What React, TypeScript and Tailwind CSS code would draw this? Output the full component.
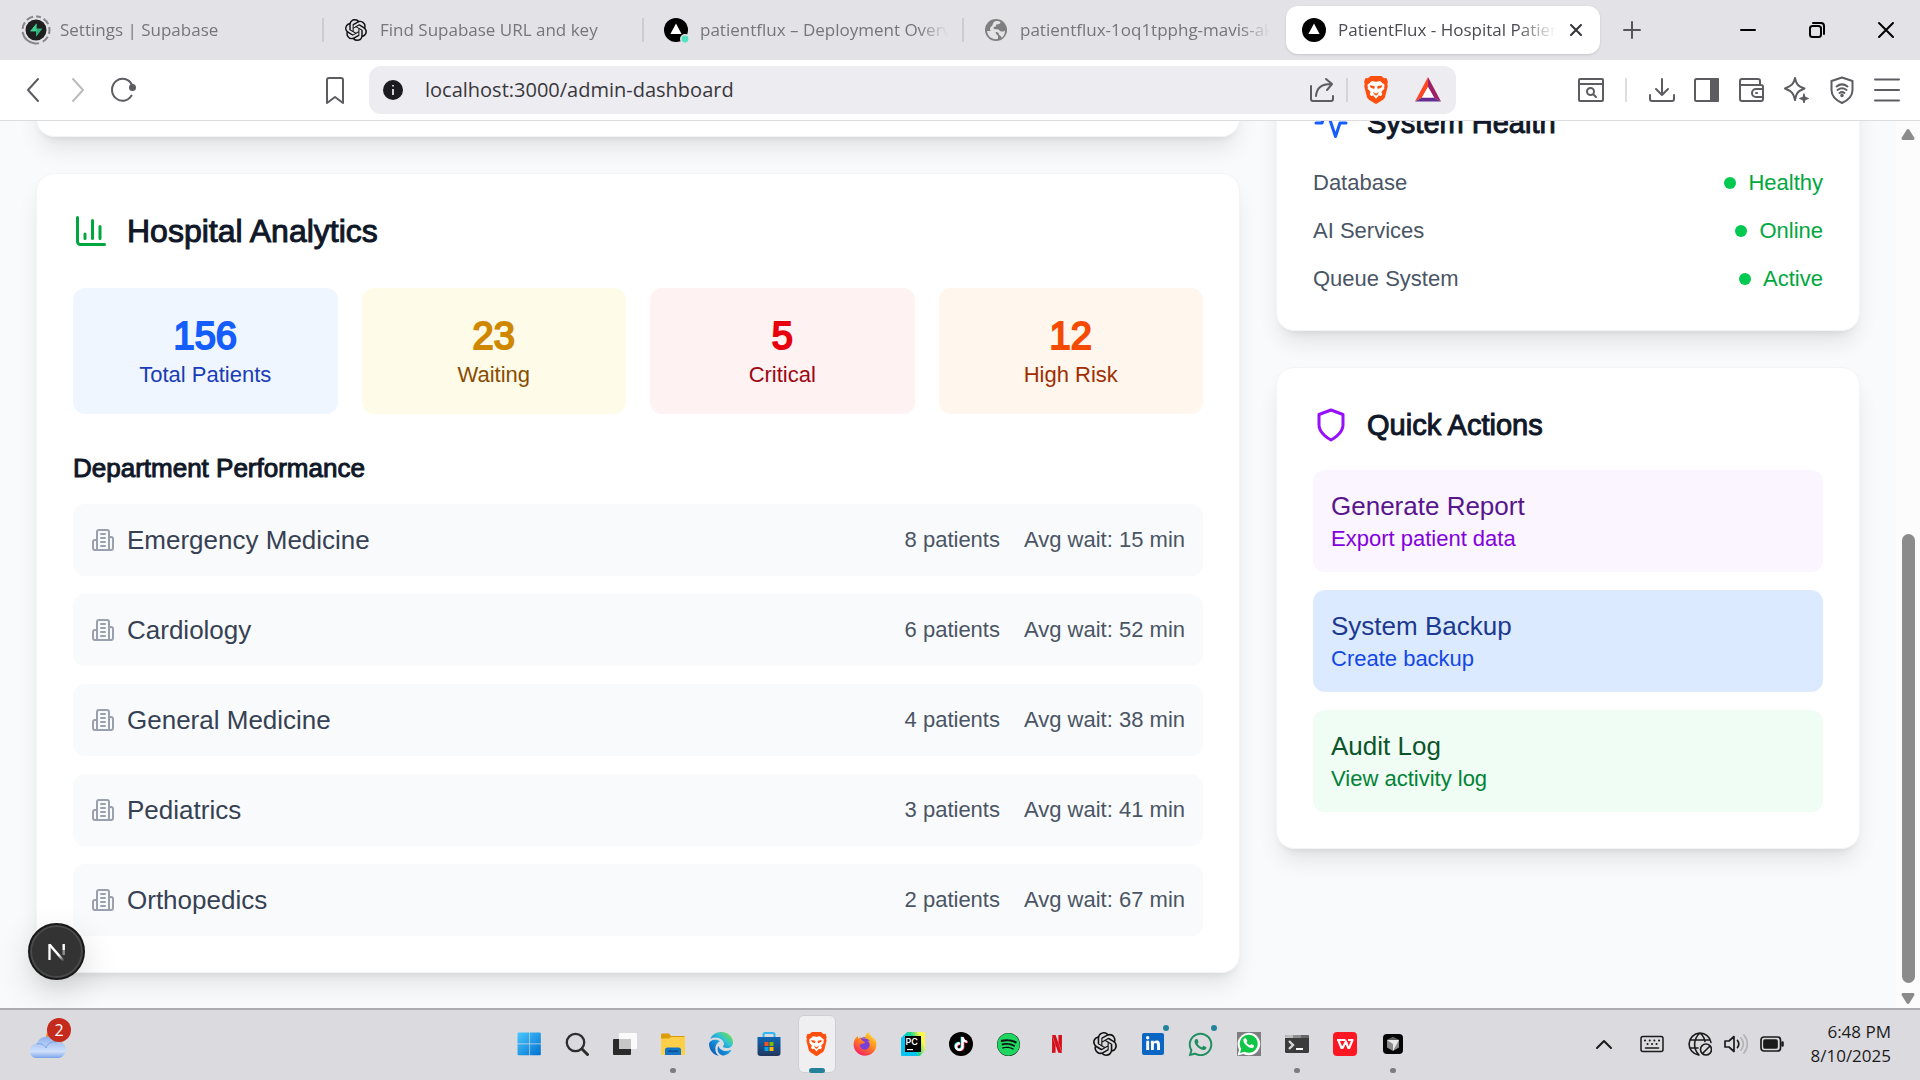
import React from "react";
import { SiOpenai, SiNetflix } from "react-icons/si";
import { FaSpotify, FaTiktok, FaWhatsapp, FaLinkedinIn, FaEdge, FaFirefoxBrowser } from "react-icons/fa6";

type SvgProps = { children: React.ReactNode; className?: string; box?: string; width?: number };

function Line({ children, className = "size-7", box = "0 0 28 28", width = 2 }: SvgProps) {
  return (
    <svg viewBox={box} className={className} fill="none" stroke="currentColor" strokeWidth={width} strokeLinecap="round" strokeLinejoin="round" aria-hidden="true">
      {children}
    </svg>
  );
}

/* ---------- Logos ---------- */

function SupabaseIcon() {
  return (
    <svg viewBox="0 0 30 30" className="size-[30px]" aria-hidden="true">
      <circle cx="15" cy="15" r="13.5" fill="none" stroke="#85858a" strokeWidth="2" strokeDasharray="18 3 7 3 7 3 5 3 7 3 7 3 7 4" transform="rotate(95 15 15)" />
      <circle cx="15" cy="15" r="10.5" fill="#1f1f1f" />
      <path d="M15.6 8.5 9.2 16.2h5.4z" fill="#3ecf8e" />
      <path d="M9.2 16.2h5.9v5.3l5.9-7.8h-5.4V8.5z" fill="#3ecf8e" />
      <path d="M15.1 21.5v-5.3h.6l.1-2.5H21z" fill="#2fae78" />
    </svg>
  );
}

function VercelIcon({ dot = false }: { dot?: boolean }) {
  return (
    <svg viewBox="0 0 26 26" className="size-[26px]" aria-hidden="true">
      <circle cx="13" cy="13" r="12" fill="#000" />
      <path d="M13 6.5 18.6 17H7.4z" fill="#fff" />
      {dot && <circle cx="22" cy="22" r="4.2" fill="#50e3c2" stroke="#e3e2e7" strokeWidth="1.6" />}
    </svg>
  );
}

function GlobeFavicon() {
  return (
    <svg viewBox="0 0 24 24" className="size-6" aria-hidden="true">
      <circle cx="12" cy="12" r="11" fill="#7f7f7f" />
      <path d="M3 13h6c2 0 3 1 3 2.600 0 1.400 2 1 2 2.400v2.800c-5 1.600-10.500-2-11-7.800zM11 3.200c1.500-.4 4-.2 5.500.8-.2 2-1.500 2.200-3 2.200-2 0-1 2.300-2.600 2.600-1.500.3-1.700 1.200-1 2 .8.900 4.300-.1 5.600 1.600 1 1.300 2.500 1 3.800 1 .8 0 1.500-.6 1.700-1.200.2 3.800-1.500 6.300-3.500 7.600 0-2.300-2.500-2-2.700-4-.1-1.200-1.500-1.800-3-1.800H8.500C6.500 14 6 12 6 10.500 6 9 8 8.500 8.500 7 9 5.500 9.500 3.800 11 3.200z" fill="#e3e2e7" />
    </svg>
  );
}

function BraveIcon({ className }: { className: string }) {
  return (
    <svg viewBox="0 0 24 28" className={className} aria-hidden="true">
      <path d="M6.500 0h11L20 2.300l2.400-.2L24 6l-.8 2 .6 2-2.600 10.500c-.4 1.500-1 2.300-2.200 3.200l-6 3.900c-.6.5-1.400.5-2 0l-6-3.900c-1.200-.9-1.800-1.700-2.200-3.200L.2 10l.6-2L0 6l1.600-3.900 2.400.2z" fill="#ff4f0f" />
      <path d="M12 5.800c1.200 0 2.600-.9 4-.8L20.700 9l-.6 2 .3 1.600-3 3.400.9 2-1.200 2-2.300-.4L12 22.800l-2.800-3.200-2.300.4-1.200-2 .9-2-3-3.400.3-1.600-.6-2L8 5c1.400-.1 2.800.8 4 .8z" fill="#fff" />
      <path d="M5.800 9.200l4.600.9.4 1.400-.7 1.600-3.600-1.500zM18.200 9.200l-4.600.9-.4 1.400.7 1.600 3.600-1.500zM9 15.800l3 2 3-2-1.800 3.200-1.200.6-1.200-.6z" fill="#ff4f0f" />
    </svg>
  );
}

function RewardsIcon() {
  return (
    <svg viewBox="0 0 28 28" className="size-7" aria-hidden="true">
      <path d="M14 1 1 25.500l7-4L14 11z" fill="#ff4724" />
      <path d="M14 1v10l6 10.500 7 4z" fill="#9e1f63" />
      <path d="m1 25.500 7-4h12l7 4z" fill="#662d91" />
      <path d="m14 11 6 10.500H8z" fill="#fff" />
    </svg>
  );
}

function WindowsIcon() {
  return (
    <svg viewBox="0 0 24 24" className="size-6" aria-hidden="true">
      <defs>
        <linearGradient id="win" x1="0" y1="0" x2="1" y2="1">
          <stop offset="0" stopColor="#4cc8ff" />
          <stop offset="1" stopColor="#0070cf" />
        </linearGradient>
      </defs>
      <path d="M1.500.500h10.700v11H.500V1.500a1 1 0 0 1 1-1zM12.800.500h10a1 1 0 0 1 1 1v10h-11zM.500 12.300h11.700v11H1.500a1 1 0 0 1-1-1zM12.800 12.300h11v10a1 1 0 0 1-1 1h-10z" fill="url(#win)" />
    </svg>
  );
}

function TaskViewIcon() {
  return (
    <svg viewBox="0 0 26 24" className="h-6 w-[26px]" aria-hidden="true">
      <rect x="1" y="7" width="18" height="16" rx="1" fill="#2a2a2a" />
      <rect x="7" y="1" width="18" height="16" rx="1" fill="#fafafa" />
      <rect x="7" y="7" width="12" height="10" fill="#c6c6c6" />
    </svg>
  );
}

function FolderIcon() {
  return (
    <svg viewBox="0 0 26 24" className="h-6 w-[26px]" aria-hidden="true">
      <path d="M1 2.500A1 1 0 0 1 2 1.500h7l2 2.500h13a1 1 0 0 1 1 1V9H1z" fill="#dc9c08" />
      <path d="M1 6.500h8L11 5h14v17a1 1 0 0 1-1 1H2a1 1 0 0 1-1-1z" fill="#ffcf4a" />
      <path d="M5 23v-5a2.500 2.500 0 0 1 2.500-2.500h11A2.500 2.500 0 0 1 21 18v5z" fill="#1373c4" />
      <rect x="8" y="18.500" width="10" height="1.500" rx=".7" fill="#084d8f" />
    </svg>
  );
}

function EdgeIcon() {
  return (
    <svg viewBox="0 0 24 24" className="size-6" aria-hidden="true">
      <defs>
        <linearGradient id="edge" x1="0.100" y1="1" x2="0.900" y2="0.100">
          <stop offset="0" stopColor="#0b4fa8" />
          <stop offset="0.450" stopColor="#1590dc" />
          <stop offset="0.700" stopColor="#2fc2d6" />
          <stop offset="1" stopColor="#6be04c" />
        </linearGradient>
      </defs>
      <FaEdge size={24} fill="url(#edge)" />
    </svg>
  );
}

function StoreIcon() {
  return (
    <svg viewBox="0 0 24 24" className="size-6" aria-hidden="true">
      <defs>
        <linearGradient id="store" x1="0" y1="0" x2="0" y2="1">
          <stop offset="0" stopColor="#0f66b4" />
          <stop offset="1" stopColor="#22365e" />
        </linearGradient>
      </defs>
      <path d="M6.500 6V2.500a1.500 1.500 0 0 1 1.500-1.500h8a1.500 1.500 0 0 1 1.500 1.500V6" fill="none" stroke="#2fb5f0" strokeWidth="2" />
      <path d="M.500 5h23v16a3 3 0 0 1-3 3h-17a3 3 0 0 1-3-3z" fill="url(#store)" />
      <rect x="7.500" y="10" width="4" height="4" fill="#f25022" />
      <rect x="12.500" y="10" width="4" height="4" fill="#7fba00" />
      <rect x="7.500" y="15" width="4" height="4" fill="#00a4ef" />
      <rect x="12.500" y="15" width="4" height="4" fill="#ffb900" />
    </svg>
  );
}

function FirefoxIcon() {
  return (
    <svg viewBox="0 0 24 24" className="size-6" aria-hidden="true">
      <defs>
        <linearGradient id="fox" x1="0.800" y1="0" x2="0.200" y2="1">
          <stop offset="0" stopColor="#ffe03a" />
          <stop offset="0.450" stopColor="#ff8a1c" />
          <stop offset="1" stopColor="#f5156c" />
        </linearGradient>
      </defs>
      <circle cx="12" cy="12" r="7" fill="#7a3fd6" />
      <FaFirefoxBrowser size={24} fill="url(#fox)" />
    </svg>
  );
}

function PyCharmIcon() {
  return (
    <span className="relative block size-6">
      <svg viewBox="0 0 24 24" className="size-6" aria-hidden="true">
        <defs>
          <linearGradient id="pc" x1="0" y1="0.600" x2="1" y2="0.200">
            <stop offset="0.200" stopColor="#07c3f2" />
            <stop offset="0.550" stopColor="#21d789" />
            <stop offset="0.850" stopColor="#fcf84a" />
          </linearGradient>
        </defs>
        <path d="M6 0h17l1 1v17l-5 6H1l-1-1V6z" fill="url(#pc)" />
        <path d="M0 8v15l1 1h15v-5H5V8z" fill="#07c3f2" />
        <rect x="4" y="4" width="16" height="16" fill="#000" />
        <rect x="6" y="17" width="6" height="1.200" fill="#fff" />
      </svg>
      <span className="absolute left-[5px] top-[5px] font-['Inter',sans-serif] text-[9px] leading-[9px] font-semibold text-white">PC</span>
    </span>
  );
}

function TikTokIcon() {
  return (
    <svg viewBox="0 0 24 24" className="size-6" aria-hidden="true">
      <circle cx="12" cy="12" r="12" fill="#000" />
      <FaTiktok size={14} x="4.300" y="4.600" color="#25f4ee" />
      <FaTiktok size={14} x="5.700" y="5.600" color="#fe2c55" />
      <FaTiktok size={14} x="5" y="5.100" color="#fff" />
    </svg>
  );
}

function WhatsAppSolid() {
  return (
    <span className="grid size-6 place-items-center bg-[#7d7d7f]">
      <svg viewBox="0 0 24 24" className="size-6" aria-hidden="true">
        <path d="M.5 23.500 2.100 17.700A11.300 11.300 0 1 1 6.500 22z" fill="#fff" />
        <path d="M3 21l1.200-4.300A9 9 0 1 1 7.700 19.800z" fill="#11c547" />
        <path d="M8.800 6.500c-.5-.6-1.400-.4-1.900.3-1.400 1.800.300 4.600 2.300 6.500s4.700 3.300 6.700 2.400c1-.5 1.500-1.700 1-2.200l-2.200-1.300c-.8-.3-1.200 1.200-1.900 1.100-1.200-.3-3.200-2.100-3.400-3 0-.5 1.200-1.100.9-1.800z" fill="#fff" />
      </svg>
    </span>
  );
}

function TerminalIcon() {
  return (
    <svg viewBox="0 0 24 20" className="h-5 w-6" aria-hidden="true">
      <rect x="0" y="1" width="24" height="18" rx="1.500" fill="#3b3b3b" />
      <path d="M0 4V2.500A1.500 1.500 0 0 1 1.500 1H8v3z" fill="#bdbdbd" />
      <path d="M8 1h8v3H8z" fill="#8c8c8c" />
      <path d="M16 1h6.500A1.500 1.500 0 0 1 24 2.500V4h-8z" fill="#666" />
      <path d="m4 7 4 4-4 4" fill="none" stroke="#d6d6d6" strokeWidth="2.400" />
      <path d="M11 15h7" stroke="#fff" strokeWidth="2" />
    </svg>
  );
}

function WpsIcon() {
  return (
    <svg viewBox="0 0 24 24" className="size-6" aria-hidden="true">
      <rect width="24" height="24" rx="4" fill="#ff1623" />
      <path d="M4 8h8.500M5.500 8.500l3 7.500h1l3.500-6.500 2.200 6.500h1l3.300-8H15" fill="none" stroke="#fff" strokeWidth="2.200" strokeLinejoin="round" />
    </svg>
  );
}

function CursorIcon() {
  return (
    <svg viewBox="0 0 20 20" className="size-5" aria-hidden="true">
      <rect width="20" height="20" rx="4" fill="#050505" />
      <path d="m10 3 6 3v7.500L10 17l-6-3.500V6z" fill="#8b8b8b" />
      <path d="m4 6 6-3 6 3-6 1z" fill="#5a5a5a" />
      <path d="M4 6h12l-6 11v-7z" fill="#e9e9e9" />
    </svg>
  );
}

function WeatherIcon() {
  return (
    <svg viewBox="0 0 38 34" className="h-[34px] w-[38px]" aria-hidden="true">
      <defs>
        <linearGradient id="cloud" x1="0" y1="0" x2="0" y2="1">
          <stop offset="0" stopColor="#8fb2ee" />
          <stop offset="0.700" stopColor="#cfe0fb" />
          <stop offset="1" stopColor="#7ba4ea" />
        </linearGradient>
      </defs>
      <circle cx="26" cy="10" r="9" fill="#f68a1e" />
      <path d="M8 31a7 7 0 0 1-.5-14A11 11 0 0 1 27 14.500 8.300 8.300 0 0 1 30 31z" fill="url(#cloud)" />
      <path d="M7.500 17c4-1 8 .5 9.500 4 1-4 5-7 10-6" fill="none" stroke="#7da2e6" strokeWidth="1" />
    </svg>
  );
}

function NextIcon() {
  return (
    <svg viewBox="0 0 24 24" className="size-6" aria-hidden="true">
      <defs>
        <linearGradient id="nd" x1="12" y1="12" x2="19" y2="21" gradientUnits="userSpaceOnUse">
          <stop offset="0.300" stopColor="#fff" />
          <stop offset="1" stopColor="#fff" stopOpacity="0" />
        </linearGradient>
      </defs>
      <path d="M4.500 20V4" stroke="#fff" strokeWidth="2.300" />
      <path d="M4.500 4.500 20 22.500" stroke="url(#nd)" strokeWidth="2.500" />
      <path d="M17.500 4h2.400v6h-2.400z" fill="#fff" />
      <path d="M17.500 10h2.400v5h-2.400z" fill="#fff" opacity=".45" />
    </svg>
  );
}

/* ---------- Browser chrome ---------- */

const tabs = [
  { title: "Settings | Supabase", icon: <SupabaseIcon /> },
  { title: "Find Supabase URL and key", icon: <SiOpenai size={22} color="#111" /> },
  { title: "patientflux – Deployment Overview", icon: <VercelIcon dot /> },
  { title: "patientflux-1oq1tpphg-mavis-akosua", icon: <GlobeFavicon /> },
];

function TabStrip() {
  return (
    <header className="flex h-[60px] shrink-0 items-center bg-[#e3e2e7] pl-1 text-[17px]">
      {tabs.map((tab, i) => (
        <button
          key={tab.title}
          className={
            "flex h-6 w-80 min-w-0 items-center gap-2 pl-4 pr-3.5 text-left text-[#76767a] " +
            (i < 3 ? "border-r-2 border-[#cdccd1]" : "")
          }
        >
          <span className="grid size-8 shrink-0 place-items-center">{tab.icon}</span>
          <span className="flex-1 overflow-hidden whitespace-nowrap [mask-image:linear-gradient(to_right,#000_88%,transparent)]">{tab.title}</span>
        </button>
      ))}
      <div className="ml-0.5 flex h-12 w-[314px] min-w-0 items-center gap-2 rounded-xl bg-white pl-3 pr-3 text-[#4b4b50] shadow-sm">
        <button className="flex min-w-0 flex-1 items-center gap-2 text-left">
          <span className="grid size-8 shrink-0 place-items-center"><VercelIcon /></span>
          <span className="flex-1 overflow-hidden whitespace-nowrap [mask-image:linear-gradient(to_right,#000_82%,transparent)]">PatientFlux - Hospital Patient Flow</span>
        </button>
        <button aria-label="Close tab" className="grid size-6 shrink-0 place-items-center text-[#333338]">
          <Line className="size-6" box="0 0 24 24" width={2}><path d="m7 7 10 10M17 7 7 17" /></Line>
        </button>
      </div>
      <button aria-label="New tab" className="ml-4 grid size-8 place-items-center text-[#555559]">
        <Line className="size-6" box="0 0 24 24" width={2}><path d="M12 4v16M4 12h16" /></Line>
      </button>
      <div className="ml-auto flex text-black">
        <button aria-label="Minimize" className="grid h-8 w-[69px] place-items-center">
          <Line className="size-6" box="0 0 24 24" width={2}><path d="M5 12h14" /></Line>
        </button>
        <button aria-label="Restore" className="grid h-8 w-[69px] place-items-center">
          <Line className="size-6" box="0 0 24 24" width={2}><rect x="5" y="8" width="11" height="11" rx="2.500" /><path d="M8 5h8a3 3 0 0 1 3 3v8" /></Line>
        </button>
        <button aria-label="Close window" className="grid h-8 w-[69px] place-items-center">
          <Line className="size-6" box="0 0 24 24" width={2}><path d="m5 5 14 14M19 5 5 19" /></Line>
        </button>
      </div>
    </header>
  );
}

function Toolbar() {
  const tools = [
    { label: "Downloads", art: <path d="M14 3v16M8 13l6 6 6-6M2 19v4a2 2 0 0 0 2 2h20a2 2 0 0 0 2-2v-4" /> },
    { label: "Sidebar", art: <><rect x="2" y="3" width="23" height="22" rx="1.500" /><path d="M18 3h7v22h-7z" fill="currentColor" /></> },
    { label: "Wallet", art: <><path d="M22 9V5a2 2 0 0 0-2-2H4a2 2 0 0 0-2 2v18a2 2 0 0 0 2 2h19a2 2 0 0 0 2-2V11a2 2 0 0 0-2-2H2" /><path d="M25 13h-7a3 3 0 0 0 0 8h7M18 17h1" /></> },
    { label: "Leo AI", art: <><path d="M12 2c1.200 5.500 2 7.800 9.500 10.500C14 15.500 13 18 12 24c-1.200-6-2.500-8.500-10-11.500C9.500 9.500 10.800 7.500 12 2z" /><path d="m21 18 1.200 3.300 3.300 1.200-3.300 1.200L21 27l-1.200-3.300-3.300-1.200 3.300-1.200z" fill="currentColor" strokeWidth="1" /></> },
    { label: "VPN", art: <><path d="M14 1.500 24.500 5v9c0 6-4 10-10.500 13C7.500 24 3.500 20 3.500 14V5z" /><path d="M8.500 10.500c3.500-2.700 7.500-2.700 11 0M9.500 14c3-2.300 6-2.300 9 0M11.500 17c1.700-1.200 3.300-1.200 5 0" /><circle cx="14" cy="19.500" r=".8" fill="currentColor" /></> },
    { label: "Menu", art: <path d="M2 3.500h24M2 14h24M2 24.500h24" /> },
  ];
  return (
    <nav aria-label="Browser toolbar" className="flex h-[61px] shrink-0 items-center border-b border-[#dcdbe0] bg-white pl-2.5 pr-[11px] text-[#5c5c61]">
      <button aria-label="Back" className="grid size-[45px] place-items-center"><Line><path d="M19 3 9 14l10 11" /></Line></button>
      <button aria-label="Forward" className="grid size-[45px] place-items-center text-[#bcbcc0]"><Line><path d="m9 3 10 11L9 25" /></Line></button>
      <button aria-label="Reload" className="grid size-[45px] place-items-center">
        <Line><path d="M22.500 19.500A10.500 11 0 1 1 23 9" /><circle cx="23.500" cy="11.500" r="2.500" fill="currentColor" /></Line>
      </button>
      <button aria-label="Bookmark" className="ml-[167px] grid size-[45px] place-items-center"><Line><path d="M6 4a2 2 0 0 1 2-2h12a2 2 0 0 1 2 2v23l-8-6-8 6z" /></Line></button>
      <div className="ml-3 flex h-12 min-w-0 flex-1 items-center rounded-xl bg-[#edecf1] pl-3.5">
        <svg viewBox="0 0 20 20" className="size-5 shrink-0" aria-hidden="true">
          <circle cx="10" cy="10" r="10" fill="#1c1c20" />
          <path d="M10 9v6M10 5v1.500" stroke="#fff" strokeWidth="1.600" />
        </svg>
        <input aria-label="Address" defaultValue="localhost:3000/admin-dashboard" className="ml-[22px] min-w-0 flex-1 bg-transparent text-[20px] text-[#38383c] outline-none" />
        <button aria-label="Share" className="grid size-10 place-items-center">
          <Line><path d="M3 10v13a2 2 0 0 0 2 2h18a2 2 0 0 0 2-2v-3M8 20c.5-7 5-12 15-12M18 3l6 5-5 6" /></Line>
        </button>
        <span className="ml-1 mr-2 h-6 w-0.5 bg-[#d5d4d9]" />
        <button aria-label="Brave Shields" className="grid h-10 w-10 place-items-center"><BraveIcon className="h-7 w-6" /></button>
        <button aria-label="Brave Rewards" className="ml-3 mr-2 grid size-10 place-items-center"><RewardsIcon /></button>
      </div>
      <button aria-label="Search page" className="ml-28 grid size-[45px] place-items-center">
        <Line><rect x="2" y="3" width="24" height="22" rx="1" /><path d="M2 8h24" /><circle cx="13.500" cy="15.500" r="3.500" /><path d="m16.500 18.500 2.500 2.500" /></Line>
      </button>
      <span className="mx-3 h-6 w-0.5 bg-[#dddce1]" />
      {tools.map((tool) => (
        <button key={tool.label} aria-label={tool.label} className="grid size-[45px] place-items-center"><Line>{tool.art}</Line></button>
      ))}
    </nav>
  );
}

/* ---------- Dashboard ---------- */

const card = "rounded-[18px] border border-gray-100 bg-white shadow-[0_15px_23px_-5px_rgba(0,0,0,0.1),0_6px_9px_-6px_rgba(0,0,0,0.1)]";
const heavy = "[-webkit-text-stroke:1px_currentColor]";

const stats = [
  { value: "156", label: "Total Patients", box: "bg-blue-50", num: "text-blue-600", text: "text-blue-800" },
  { value: "23", label: "Waiting", box: "bg-yellow-50", num: "text-yellow-600", text: "text-yellow-800" },
  { value: "5", label: "Critical", box: "bg-red-50", num: "text-red-600", text: "text-red-800" },
  { value: "12", label: "High Risk", box: "bg-orange-50", num: "text-orange-600", text: "text-orange-800" },
];

const departments = [
  { name: "Emergency Medicine", patients: 8, wait: 15 },
  { name: "Cardiology", patients: 6, wait: 52 },
  { name: "General Medicine", patients: 4, wait: 38 },
  { name: "Pediatrics", patients: 3, wait: 41 },
  { name: "Orthopedics", patients: 2, wait: 67 },
];

const health = [
  { name: "Database", state: "Healthy" },
  { name: "AI Services", state: "Online" },
  { name: "Queue System", state: "Active" },
];

const actions = [
  { title: "Generate Report", note: "Export patient data", box: "bg-purple-50", strong: "text-purple-900", soft: "text-purple-700" },
  { title: "System Backup", note: "Create backup", box: "bg-blue-100", strong: "text-blue-900", soft: "text-blue-700" },
  { title: "Audit Log", note: "View activity log", box: "bg-green-50", strong: "text-green-900", soft: "text-green-700" },
];

function Analytics() {
  return (
    <section className={card + " p-9"}>
      <h2 className={"mb-9 flex items-center gap-[18px] text-[32px] leading-[42px] text-gray-900 " + heavy}>
        <Line className="size-9 text-green-600" box="0 0 24 24"><path d="M3 3v16a2 2 0 0 0 2 2h16M18 17V9M13 17V5M8 17v-3" /></Line>
        Hospital Analytics
      </h2>
      <div className="mb-9 grid grid-cols-4 gap-6">
        {stats.map((s) => (
          <div key={s.label} className={"rounded-xl py-6 text-center " + s.box}>
            <p className={"text-[38px] leading-[48px] [-webkit-text-stroke:2px_currentColor] " + s.num}>{s.value}</p>
            <p className={"text-[22px] leading-[30px] " + s.text}>{s.label}</p>
          </div>
        ))}
      </div>
      <h3 className={"mb-[18px] text-[26px] leading-9 text-gray-900 " + heavy}>Department Performance</h3>
      <ul className="flex flex-col gap-[18px]">
        {departments.map((d) => (
          <li key={d.name} className="flex items-center justify-between rounded-xl bg-gray-50 p-[18px]">
            <span className="flex items-center gap-3 text-[26px] leading-9 text-gray-700">
              <Line className="size-6 text-gray-400" box="0 0 24 24">
                <path d="M6 22V4a2 2 0 0 1 2-2h8a2 2 0 0 1 2 2v18ZM6 12H4a2 2 0 0 0-2 2v6a2 2 0 0 0 2 2h2M18 9h2a2 2 0 0 1 2 2v9a2 2 0 0 1-2 2h-2M10 6h4M10 10h4M10 14h4M10 18h4" />
              </Line>
              {d.name}
            </span>
            <span className="flex gap-6 text-[22px] leading-[30px] text-gray-600">
              <span>{d.patients} patients</span>
              <span>Avg wait: {d.wait} min</span>
            </span>
          </li>
        ))}
      </ul>
    </section>
  );
}

function SideTitle({ icon, children }: { icon: React.ReactNode; children: React.ReactNode }) {
  return (
    <h2 className={"mb-6 flex items-center gap-[18px] text-[29px] leading-[42px] text-gray-900 " + heavy}>
      {icon}
      {children}
    </h2>
  );
}

function ScrollArrow({ className }: { className: string }) {
  return (
    <svg viewBox="0 0 14 11" className={className} aria-hidden="true">
      <path d="M7 0c.6 0 1 .3 1.300.800l5 8c.5 1-.1 2.200-1.300 2.200H2C.8 11 .2 9.800.7 8.800l5-8C6 .300 6.400 0 7 0z" fill="currentColor" />
    </svg>
  );
}

function Dashboard() {
  return (
    <main className="relative flex min-h-0 flex-1 overflow-hidden bg-gray-50 font-['Liberation_Sans',Arial,sans-serif]">
      <div className="-mt-14 grid min-w-0 flex-1 grid-cols-3 content-start items-start gap-9 px-9">
        <div className="col-span-2 flex flex-col gap-9">
          <div className={card + " h-[72px]"} />
          <Analytics />
        </div>
        <div className="flex flex-col gap-9">
          <section className={card + " p-9"}>
            <SideTitle icon={<Line className="size-9 text-blue-600" box="0 0 24 24"><path d="M22 12h-4l-3 9L9 3l-3 9H2" /></Line>}>System Health</SideTitle>
            <ul className="flex flex-col gap-[18px] text-[22px] leading-[30px]">
              {health.map((h) => (
                <li key={h.name} className="flex items-center justify-between text-gray-600">
                  {h.name}
                  <span className="flex items-center gap-3 text-green-600">
                    <span className="size-3 rounded-full bg-green-500" />
                    {h.state}
                  </span>
                </li>
              ))}
            </ul>
          </section>
          <section className={card + " p-9"}>
            <SideTitle icon={<Line className="size-9 text-purple-600" box="0 0 24 24"><path d="M12 22s8-4 8-10V5l-8-3-8 3v7c0 6 8 10 8 10z" /></Line>}>Quick Actions</SideTitle>
            <div className="flex flex-col gap-[18px]">
              {actions.map((a) => (
                <button key={a.title} className={"rounded-xl p-[18px] text-left " + a.box}>
                  <span className={"block text-[26px] leading-9 " + a.strong}>{a.title}</span>
                  <span className={"block text-[22px] leading-[30px] " + a.soft}>{a.note}</span>
                </button>
              ))}
            </div>
          </section>
        </div>
      </div>
      <div aria-hidden="true" className="flex w-6 shrink-0 flex-col items-center bg-[#fcfcfc] pb-1 pt-2 text-[#8b8b8b]">
        <ScrollArrow className="w-3.5" />
        <div className="min-h-0 w-[13px] grow-[393]" />
        <div className="min-h-0 w-[13px] grow-[448] rounded-full bg-[#8b8b8b]" />
        <ScrollArrow className="mt-2.5 w-3.5 rotate-180" />
      </div>
      <button aria-label="Open Next.js Dev Tools" className="absolute bottom-7 left-7 grid size-[57px] place-items-center rounded-full border-2 border-[#191919] bg-[#333] shadow-[0_12px_36px_rgba(0,0,0,0.14),inset_0_0_0_2px_#4a4a4a]">
        <NextIcon />
      </button>
    </main>
  );
}

/* ---------- Taskbar ---------- */

type AppEntry = { name: string; icon: React.ReactNode; open?: boolean; active?: boolean; alert?: boolean };

const apps: AppEntry[] = [
  { name: "Start", icon: <WindowsIcon /> },
  { name: "Search", icon: <Line className="size-6 text-[#2d2d2d]" box="0 0 24 24" width={2.300}><circle cx="10.500" cy="10.500" r="8.700" /><path d="m17 17 5.500 5.500" strokeWidth="3" /></Line> },
  { name: "Task view", icon: <TaskViewIcon /> },
  { name: "File Explorer", icon: <FolderIcon />, open: true },
  { name: "Edge", icon: <EdgeIcon /> },
  { name: "Microsoft Store", icon: <StoreIcon /> },
  { name: "Brave", icon: <BraveIcon className="h-6 w-[21px]" />, active: true },
  { name: "Firefox", icon: <FirefoxIcon /> },
  { name: "PyCharm", icon: <PyCharmIcon /> },
  { name: "TikTok", icon: <TikTokIcon /> },
  { name: "Spotify", icon: <span className="rounded-full bg-[#111]"><FaSpotify size={23} color="#1ed760" /></span> },
  { name: "Netflix", icon: <SiNetflix size={18} color="#d5101b" /> },
  { name: "ChatGPT", icon: <SiOpenai size={24} color="#111" /> },
  { name: "LinkedIn", icon: <span className="grid size-[22px] place-items-center rounded-xs bg-[#0a66c2]"><FaLinkedinIn size={16} color="#fff" /></span>, alert: true },
  { name: "WhatsApp Web", icon: <FaWhatsapp size={27} color="#1f8f5f" />, alert: true },
  { name: "WhatsApp", icon: <WhatsAppSolid /> },
  { name: "Terminal", icon: <TerminalIcon />, open: true },
  { name: "WPS Office", icon: <WpsIcon /> },
  { name: "Cursor", icon: <CursorIcon />, open: true },
];

function Taskbar() {
  return (
    <footer className="grid h-[72px] shrink-0 grid-cols-[1fr_auto_1fr] items-center border-t-2 border-[#adadb0] bg-[#dbdadf] pb-0.5 pl-px text-[#1b1b1b]">
      <div className="pl-7">
        <button aria-label="Weather, 2 alerts" className="relative grid h-14 w-[38px] place-items-center">
          <WeatherIcon />
          <span className="absolute left-[18px] top-0.5 grid size-6 place-items-center rounded-full bg-[#c42b1c] text-base leading-6 text-white">2</span>
        </button>
      </div>
      <div className="flex">
        {apps.map((app) => (
          <button key={app.name} aria-label={app.name} className="relative grid h-[58px] w-12 place-items-center">
            {app.active && <span className="absolute inset-x-[5px] inset-y-0 rounded-md border border-[#cfced3] bg-[#efeff1]" />}
            <span className="relative grid place-items-center">{app.icon}</span>
            {app.active && <span className="absolute bottom-0 h-[5px] w-4 rounded-full bg-[#24829a]" />}
            {app.open && <span className="absolute bottom-0 h-[5px] w-1.5 rounded-full bg-[#7d7d80]" />}
            {app.alert && <span className="absolute right-2 top-2.5 size-1.5 rounded-full bg-[#24829a]" />}
          </button>
        ))}
      </div>
      <div className="flex items-center justify-end pr-[29px]">
        <button aria-label="Show hidden icons" className="grid w-12 place-items-center"><Line className="size-6" box="0 0 24 24"><path d="m5 16 7-7 7 7" /></Line></button>
        <button aria-label="Touch keyboard" className="grid w-12 place-items-center">
          <Line className="size-6" box="0 0 24 24" width={1.500}><rect x="1" y="4.500" width="22" height="15" rx="2" /><path d="M5 8.500h.1M9.700 8.500h.1M14.300 8.500h.1M19 8.500h.1M7.500 12h.1M12 12h.1M16.500 12h.1" strokeWidth="2" /><path d="M5.500 16h13" /></Line>
        </button>
        <button aria-label="Network, sound and battery" className="flex w-[120px] items-center justify-center gap-3">
          <Line className="size-6" box="0 0 24 24" width={1.600}>
            <path d="M10.500 23A11 11 0 1 1 23 10.500M11 23C5 17 5 7 12 1c3 2.500 4.500 5.500 5 8.500M2 8h20M2 16h8" />
            <circle cx="18" cy="17.500" r="5.500" /><path d="m14.500 21.500 7.500-7.500" />
          </Line>
          <Line className="size-6" box="0 0 24 24" width={1.700}>
            <path d="M1 9v6h4l5 4.500v-15L5 9zM13.500 8.500c1.700 2.300 1.700 4.700 0 7" />
            <path d="M17 6c3 3.800 3 8.200 0 12M20 3c4.500 5.500 4.500 12.500 0 18" stroke="#b3b3b6" />
          </Line>
          <Line className="size-6" box="0 0 24 24" width={1.700}>
            <rect x="1" y="5" width="19.500" height="14" rx="3" /><rect x="4" y="8" width="13" height="8" rx="1" fill="currentColor" /><path d="M22.500 10.500v3" strokeWidth="2.500" />
          </Line>
        </button>
        <button aria-label="Clock" className="ml-3.5 text-right text-[17px] leading-6">
          <span className="block">6:48 PM</span>
          <span className="block">8/10/2025</span>
        </button>
      </div>
    </footer>
  );
}

export default function App() {
  return (
    <div className="flex h-screen flex-col overflow-hidden font-['Open_Sans','Noto_Sans',sans-serif]">
      <TabStrip />
      <Toolbar />
      <Dashboard />
      <Taskbar />
    </div>
  );
}
